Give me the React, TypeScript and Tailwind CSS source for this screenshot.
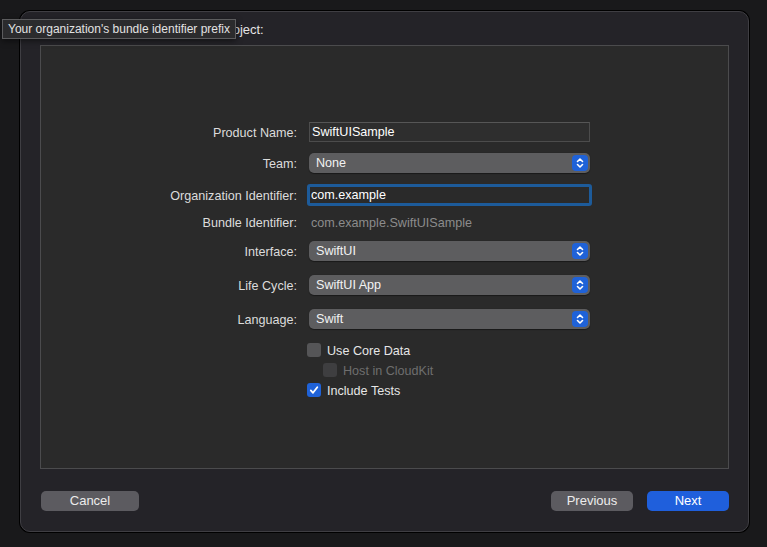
const Chevron = () => (
  <span className="w-[16px] h-[16px] rounded-[4px] bg-[#1f62d8] flex items-center justify-center">
    <svg width="10" height="12" viewBox="0 0 10 12" fill="none" stroke="white" strokeWidth={1.6} strokeLinecap="round" strokeLinejoin="round">
      <path d="M2.5 4.5 L5 2 L7.5 4.5" />
      <path d="M2.5 7.5 L5 10 L7.5 7.5" />
    </svg>
  </span>
);

const Label = ({ children }: { children: string }) => (
  <div className="w-[257px] pr-[1px] pt-[2px] text-right text-[#dcdcdc] shrink-0">{children}</div>
);

const Popup = ({ value }: { value: string }) => (
  <div className="w-[281px] ml-[11px] h-[20px] rounded-[5px] bg-[#5d5d5f] flex items-center justify-between pl-[7px] pr-[2px] text-[#f2f2f2] shadow-[0_0.5px_1px_rgba(0,0,0,0.4)]">
    <span className="pt-[1px]">{value}</span>
    <Chevron />
  </div>
);

const Checkbox = ({ checked, disabled }: { checked?: boolean; disabled?: boolean }) => (
  <span
    className={
      checked
        ? 'w-[14px] h-[14px] rounded-[3px] bg-[#1f62d8] flex items-center justify-center'
        : disabled
          ? 'w-[14px] h-[14px] rounded-[3px] bg-[#3e3e40]'
          : 'w-[14px] h-[14px] rounded-[3px] bg-[#555557]'
    }
  >
    {checked && (
      <svg width="10" height="10" viewBox="0 0 10 10" fill="none" stroke="white" strokeWidth={1.8} strokeLinecap="round" strokeLinejoin="round">
        <path d="M1.8 5.4 L4 7.8 L8.3 2.2" />
      </svg>
    )}
  </span>
);

export default function App() {
  return (
    <div className="w-[767px] h-[547px] bg-[#19191b] pt-[11px] pl-[20px] text-[12.6px] font-['Liberation_Sans',Arial,sans-serif] relative overflow-hidden">
      <div className="w-[729px] h-[521px] rounded-[10px] border border-[#3f3e43] bg-[#242328] shadow-[0_0_0_1px_#000] flex flex-col px-[19px]">
        <div className="h-[33px] flex items-center pt-[3px] pl-[12px] text-[13px] text-[#e4e4e4]">Choose options for your new project:</div>

        <div className="h-[424px] border border-[#4b4b4d] bg-[#2a2a2a] pt-[76px] flex flex-col">
          <div className="flex items-center h-[20px]">
            <Label>Product Name:</Label>
            <div className="w-[281px] ml-[11px] h-[20px] bg-[#2e2e2e] border border-[#4c4c4c] border-t-[#565656] flex items-center pl-[2px] pt-[1px] text-white">
              SwiftUISample
            </div>
          </div>

          <div className="flex items-center h-[20px] mt-[11px]">
            <Label>Team:</Label>
            <Popup value="None" />
          </div>

          <div className="flex items-center h-[22px] mt-[11px]">
            <Label>Organization Identifier:</Label>
            <div className="w-[285px] ml-[9px] h-[22px] rounded-[3px] border-[3px] border-[#1d5b9a] bg-[#2a2a2a] flex items-center pl-[1px] pt-[1px] text-white">
              com.example
            </div>
          </div>

          <div className="flex items-center h-[20px] mt-[6px]">
            <Label>Bundle Identifier:</Label>
            <div className="ml-[13px] pt-[2px] text-[#8c8c8c]">com.example.SwiftUISample</div>
          </div>

          <div className="flex items-center h-[20px] mt-[9px]">
            <Label>Interface:</Label>
            <Popup value="SwiftUI" />
          </div>

          <div className="flex items-center h-[20px] mt-[14px]">
            <Label>Life Cycle:</Label>
            <Popup value="SwiftUI App" />
          </div>

          <div className="flex items-center h-[20px] mt-[14px]">
            <Label>Language:</Label>
            <Popup value="Swift" />
          </div>

          <div className="flex flex-col pl-[266px] mt-[11px]">
            <div className="flex items-center h-[20px] gap-[6px] text-[#e6e6e6]">
              <Checkbox />
              <span className="pt-[2px]">Use Core Data</span>
            </div>
            <div className="flex items-center h-[20px] gap-[6px] pl-[16px] text-[#6e6e6e]">
              <Checkbox disabled />
              <span className="pt-[2px]">Host in CloudKit</span>
            </div>
            <div className="flex items-center h-[20px] gap-[6px] text-[#e6e6e6]">
              <Checkbox checked />
              <span className="pt-[2px]">Include Tests</span>
            </div>
          </div>
        </div>

        <div className="flex items-center justify-between mt-[22px] pl-[1px]">
          <button className="w-[98px] h-[20px] rounded-[5px] bg-[#5c5b60] text-[13px] text-[#ececec]">Cancel</button>
          <div className="flex gap-[14px]">
            <button className="w-[82px] h-[20px] rounded-[5px] bg-[#5c5b60] text-[13px] text-[#ececec]">Previous</button>
            <button className="w-[82px] h-[20px] rounded-[5px] bg-[#1f5fdc] text-[13px] text-white">Next</button>
          </div>
        </div>
      </div>

      <div className="absolute left-[2px] top-[19px] h-[20px] px-[5px] flex items-center bg-[#2b2b2d] border border-[#5c5c5e] text-[12px] text-[#e2e2e2] shadow-[0_2px_6px_rgba(0,0,0,0.5)]">
        Your organization's bundle identifier prefix
      </div>
    </div>
  );
}
